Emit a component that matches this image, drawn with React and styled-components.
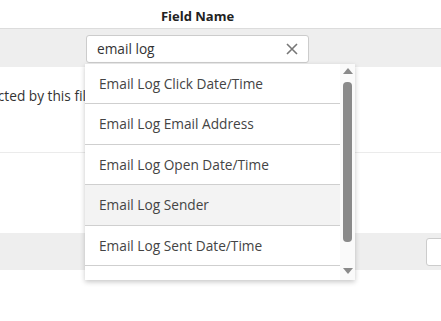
import React from "react";
import styled, { createGlobalStyle } from "styled-components";

const GlobalStyle = createGlobalStyle`
  body {
    margin: 0;
    background: #fff;
    font-family: "Open Sans", "Liberation Sans", sans-serif;
    color: #333;
    overflow: hidden;
  }
`;

const options = [
  "Email Log Click Date/Time",
  "Email Log Email Address",
  "Email Log Open Date/Time",
  "Email Log Sender",
  "Email Log Sent Date/Time",
];

function ClearIcon() {
  return (
    <svg width="12" height="12" viewBox="0 0 12 12">
      <path d="M1 1L11 11M11 1L1 11" stroke="#777" strokeWidth="1.6" fill="none" />
    </svg>
  );
}

function App() {
  return (
    <Page>
      <GlobalStyle />
      <HeaderRow>
        <Spacer />
        <HeaderCell>Field Name</HeaderCell>
      </HeaderRow>
      <FilterRow>
        <Spacer />
        <SearchWrap>
          <SearchInput defaultValue="email log" />
          <ClearButton>
            <ClearIcon />
          </ClearButton>
          <Dropdown>
            <OptionList>
              {options.map((o, i) => (
                <Option key={o} $hover={i === 3}>
                  {o}
                </Option>
              ))}
            </OptionList>
            <ScrollTrack>
              <ArrowUp />
              <Thumb />
              <ArrowDown />
            </ScrollTrack>
          </Dropdown>
        </SearchWrap>
      </FilterRow>
      <MessageRow>
        <Message>Records are selected by this filter</Message>
      </MessageRow>
      <EmptyRow />
      <FooterBand>
        <FooterBox />
      </FooterBand>
    </Page>
  );
}

export default App;

const Page = styled.div`
  width: 441px;
  height: 321px;
  overflow: hidden;
`;

const HeaderRow = styled.div`
  display: flex;
  height: 28px;
  border-bottom: 1px solid #dcdcdc;
`;

const Spacer = styled.div`
  width: 86px;
  flex-shrink: 0;
`;

const HeaderCell = styled.div`
  width: 223px;
  display: flex;
  align-items: center;
  justify-content: center;
  font-weight: 700;
  font-size: 13px;
  color: #222;
  padding-top: 4px;
`;

const FilterRow = styled.div`
  display: flex;
  align-items: center;
  height: 38px;
  background: #eeeeee;
  position: relative;
  z-index: 2;
`;

const SearchWrap = styled.div`
  position: relative;
  width: 223px;
  height: 28px;
  margin-top: 1px;
`;

const SearchInput = styled.input`
  box-sizing: border-box;
  width: 100%;
  height: 100%;
  border: 1px solid #cccccc;
  border-radius: 3px;
  padding: 0 30px 0 10px;
  font-family: inherit;
  font-size: 13.7px;
  color: #333;
  background: #fff;
  outline: none;
`;

const ClearButton = styled.span`
  position: absolute;
  right: 11px;
  top: 8px;
  display: flex;
`;

const Dropdown = styled.div`
  position: absolute;
  top: 29px;
  left: -1px;
  width: 270px;
  height: 216px;
  background: #fff;
  box-shadow: 0 2px 5px rgba(0, 0, 0, 0.22);
  display: flex;
  overflow: hidden;
`;

const OptionList = styled.div`
  flex: 1;
  overflow: hidden;
`;

const Option = styled.div`
  height: 39.5px;
  display: flex;
  align-items: center;
  padding-left: 14px;
  font-size: 13.7px;
  color: #444;
  border-bottom: 1px solid #cfcfcf;
  background: ${(p) => (p.$hover ? "#f3f3f3" : "#fff")};
`;

const ScrollTrack = styled.div`
  width: 15px;
  background: #fafafa;
  display: flex;
  flex-direction: column;
  align-items: center;
  padding-top: 4px;
`;

const ArrowUp = styled.div`
  width: 0;
  height: 0;
  border-left: 5px solid transparent;
  border-right: 5px solid transparent;
  border-bottom: 6px solid #8a8a8a;
`;

const ArrowDown = styled.div`
  width: 0;
  height: 0;
  border-left: 5px solid transparent;
  border-right: 5px solid transparent;
  border-top: 6px solid #8a8a8a;
  margin-top: 26px;
`;

const Thumb = styled.div`
  width: 9px;
  height: 160px;
  margin-top: 8px;
  border-radius: 4px;
  background: #8a8a8a;
`;

const MessageRow = styled.div`
  height: 85px;
  border-bottom: 1px solid #ebebeb;
  overflow: hidden;
  display: flex;
  align-items: center;
  white-space: nowrap;
`;

const Message = styled.div`
  font-size: 13.7px;
  color: #333;
  margin-left: -107px;
  margin-top: -28px;
`;

const EmptyRow = styled.div`
  height: 80px;
`;

const FooterBand = styled.div`
  height: 37px;
  background: #eeeeee;
  display: flex;
  justify-content: flex-end;
  align-items: center;
  padding-top: 1px;
  box-sizing: border-box;
`;

const FooterBox = styled.div`
  width: 30px;
  height: 28px;
  margin-right: -15px;
  box-sizing: border-box;
  background: #fff;
  border: 1px solid #cccccc;
  border-radius: 3px;
`;
